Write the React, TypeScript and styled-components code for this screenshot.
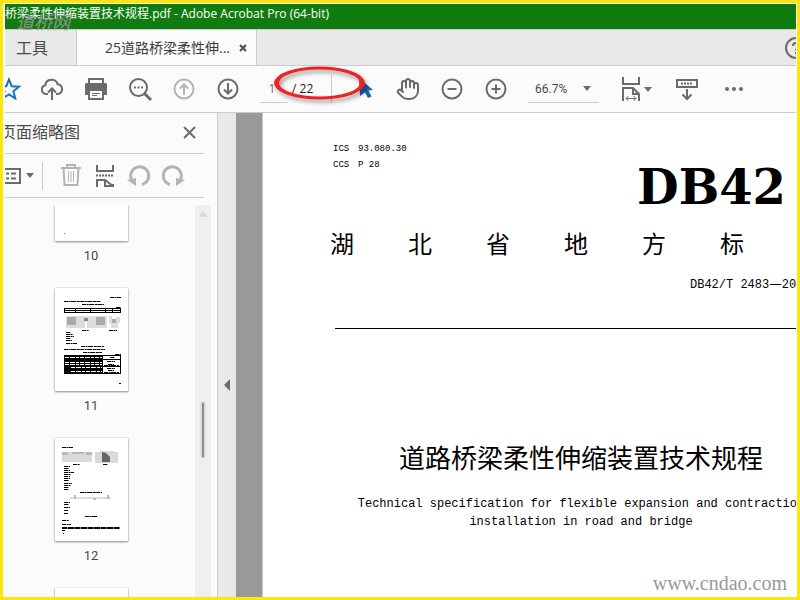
import React, { useState } from "react";
import styled, { createGlobalStyle } from "styled-components";
import { Hand } from "lucide-react";

const UI = `"Open Sans", "Noto Sans CJK SC", sans-serif`;
const NUM = `Roboto, "Noto Sans CJK SC", sans-serif`;
const MONO = `"Liberation Mono", "Noto Sans CJK SC", monospace`;
const INK = "#6b6b6b";
const MUTED = "#b4b4b4";

const GlobalStyle = createGlobalStyle`
  * { box-sizing: border-box; }
  body { margin: 0; font-family: ${UI}; color: #4a4a4a; }
  button, select, input { font: inherit; color: inherit; background: none; border: 0; padding: 0; margin: 0; }
  svg { display: block; flex: none; }
`;

const Frame = styled.div`
  position: relative;
  height: 100vh;
  display: flex;
  flex-direction: column;
  border: 3px solid #fde60a;
  padding: 1px 1px 0 2px;
  background: #fff;
  overflow: hidden;
`;

const TitleBar = styled.header`
  flex: none;
  height: 25px;
  background: #107c10;
  color: #fff;
  font-size: 12px;
  line-height: 20px;
  white-space: nowrap;
  overflow: hidden;
`;

const TitleText = styled.div`
  margin-left: -12px;
`;

const TabBar = styled.div`
  flex: none;
  height: 37px;
  display: flex;
  align-items: stretch;
  background: #e9e9e9;
  border-top: 1px solid #cbcbcb;
  border-bottom: 1px solid #cbcbcb;
  overflow: hidden;
`;

const ToolsTab = styled.button`
  width: 72px;
  padding-right: 17px;
  font-size: 16px;
  line-height: 24px;
  border-right: 1px solid #cbcbcb;
`;

const FileTab = styled.div`
  width: 180px;
  margin-bottom: -1px;
  padding: 0 9px 0 28px;
  display: flex;
  align-items: center;
  justify-content: space-between;
  background: #fbfbfb;
  border-right: 1px solid #cbcbcb;
`;

const FileName = styled.button`
  font-size: 14px;
  line-height: 24px;
  color: #3a3a3a;
  white-space: nowrap;
`;

const Help = styled.button`
  margin-left: auto;
  width: 11px;
  display: flex;
  align-items: center;
  overflow: hidden;
  color: ${INK};
`;

const Toolbar = styled.div`
  flex: none;
  height: 47px;
  display: flex;
  align-items: center;
  background: #fbfbfb;
  border-bottom: 1px solid #cbcbcb;
  overflow: hidden;
`;

const ToolButton = styled.button<{ $w?: number; $muted?: boolean }>`
  flex: none;
  width: ${(p) => p.$w ?? 44}px;
  height: 40px;
  display: flex;
  align-items: center;
  justify-content: center;
  gap: 4px;
  color: ${(p) => (p.$muted ? MUTED : INK)};
`;

const StarButton = styled(ToolButton)`
  justify-content: flex-end;
  padding-right: 9px;
  color: #1473c8;
  overflow: hidden;
`;

const PageField = styled.label`
  flex: none;
  width: 72px;
  height: 28px;
  margin-left: 10px;
  display: flex;
  align-items: stretch;
  gap: 4px;
  font: 12px/28px ${UI};
  color: #222;
  border-right: 1px solid #cbcbcb;
`;

const PageInput = styled.input`
  width: 28px;
  padding-right: 4px;
  text-align: center;
  color: #6a6a6a;
  border-bottom: 1px solid #cbcbcb;
`;

const CursorButton = styled(ToolButton)`
  margin-left: 10px;
  color: #1766ad;
`;

const ZoomBox = styled.div`
  flex: none;
  width: 71px;
  height: 28px;
  margin: 0 16px 0 10px;
  display: flex;
  align-items: center;
  border-bottom: 1px solid #cbcbcb;
  color: ${INK};
`;

const ZoomSelect = styled.select`
  appearance: none;
  width: 55px;
  padding-left: 7px;
  font: 12px/28px ${NUM};
  color: #4a4a4a;
  outline: none;
`;

const Body = styled.div`
  flex: 1;
  min-height: 0;
  display: flex;
`;

const Sidebar = styled.aside`
  flex: none;
  width: 213px;
  display: flex;
  flex-direction: column;
  background: #fbfbfb;
  border-right: 1px solid #cbcbcb;
  overflow: hidden;
`;

const PanelHead = styled.div`
  flex: none;
  height: 41px;
  margin-right: 13px;
  padding: 0 8px 2px 0;
  display: flex;
  align-items: center;
  justify-content: space-between;
  border-bottom: 1px solid #cbcbcb;
`;

const PanelTitle = styled.h2`
  margin: 0 0 0 -5px;
  font-size: 16px;
  line-height: 24px;
  font-weight: 400;
`;

const PanelTools = styled.div`
  flex: none;
  height: 44px;
  margin-right: 13px;
  display: flex;
  align-items: center;
  border-bottom: 1px solid #cbcbcb;
`;

const OptionsButton = styled(ToolButton)`
  justify-content: flex-end;
  gap: 5px;
  padding-right: 8px;
  overflow: hidden;
`;

const Divider = styled.span`
  width: 1px;
  height: 28px;
  margin-right: 11px;
  background: #cbcbcb;
`;

const ThumbArea = styled.div`
  flex: 1;
  min-height: 0;
  margin-top: 7px;
  display: flex;
  justify-content: flex-end;
  overflow: hidden;
`;

const ThumbList = styled.div`
  flex: 1;
  padding-right: 18px;
  display: flex;
  flex-direction: column;
  align-items: center;
`;

const Thumb = styled.button`
  flex: none;
  display: flex;
  flex-direction: column;
  align-items: center;
  font: 13px/30px ${NUM};
  color: #4a4a4a;
`;

const Paper = styled.span<{ $cut?: boolean }>`
  display: flex;
  align-items: flex-end;
  width: 73px;
  height: ${(p) => (p.$cut ? 36 : 103)}px;
  background: #fff;
  box-shadow: 0 1px 2px #8a8a8a, 0 0 1px #aaa;
  overflow: hidden;
`;

const ThumbLabel = styled.span`
  height: 47px;
`;

const ScrollTrack = styled.div`
  width: 16px;
  margin-right: 6px;
  display: flex;
  flex-direction: column;
  align-items: center;
  background: #efefef;
`;

const ScrollThumb = styled.div`
  width: 6px;
  height: 56px;
  margin-top: 184px;
  border: 2px solid #dedede;
  border-width: 0 2px;
  border-radius: 3px;
  background: #8a8a8a;
`;

const Collapse = styled.button`
  flex: none;
  width: 18px;
  display: flex;
  align-items: center;
  justify-content: center;
  padding-top: 60px;
  background: #e9e9e9;
  color: ${INK};
`;

const Canvas = styled.main`
  flex: 1;
  min-width: 0;
  display: flex;
  padding-left: 26px;
  background: #999;
`;

const Sheet = styled.article`
  flex: 1;
  min-width: 0;
  padding: 28px 0 0 67px;
  background: #fff;
  border-left: 1px solid #cbcbcb;
  color: #000;
  overflow: hidden;
`;

const SheetColumn = styled.div`
  width: 502px;
  display: flex;
  flex-direction: column;
`;

const Codes = styled.dl`
  margin: 0 0 0 3px;
  display: grid;
  grid-template-columns: 25px auto;
  font: 9px/16px ${MONO};
  dd { margin: 0; }
`;

const Emblem = styled.div`
  align-self: flex-end;
  margin-right: 46px;
  font: 700 48px/28px "DejaVu Serif", serif;
`;

const Region = styled.div`
  display: flex;
  gap: 54px;
  margin-top: 26px;
  font: 24px/32px "Noto Sans CJK SC", sans-serif;
`;

const StandardNo = styled.div`
  height: 20px;
  margin: 16px 0 0 360px;
  font: 12px/20px ${MONO};
  white-space: pre;
`;

const Dash = styled.span`
  font-family: "Noto Sans CJK SC", sans-serif;
  font-size: 14px;
  line-height: 1;
`;

const Rule = styled.hr`
  width: 100%;
  height: 1px;
  margin: 33px 0 0 5px;
  border: 0;
  background: #000;
`;

const DocTitle = styled.h1`
  margin: 110px 0 0;
  text-align: center;
  font: 400 26px/36px "Noto Sans CJK SC", sans-serif;
`;

const Subtitle = styled.p`
  margin: 20px 0 0;
  text-align: center;
  font: 12px/18px ${MONO};
`;

const SiteMark = styled.div`
  position: absolute;
  right: 10px;
  bottom: 2px;
  font: 20px/24px "Liberation Serif", serif;
  color: #999;
`;

const BrandMark = styled.div`
  position: absolute;
  left: 13px;
  top: 6px;
  font: italic 18px/24px "Noto Sans CJK SC", sans-serif;
  color: rgba(165, 155, 165, 0.85);
`;

const RingMark = styled.svg`
  position: absolute;
  left: 266px;
  top: 60px;
  pointer-events: none;
`;

type IconProps = { w?: number; h?: number; sw?: number; children: React.ReactNode };
const Icon = ({ w = 24, h = 24, sw = 2, children }: IconProps) => (
  <svg width={w} height={h} viewBox={`0 0 ${w} ${h}`} fill="none" stroke="currentColor" strokeWidth={sw} aria-hidden="true">
    {children}
  </svg>
);

const Caret = () => (
  <Icon w={8} h={5}>
    <path d="M0 0h8L4 5z" fill="currentColor" stroke="none" />
  </Icon>
);

const Cross = ({ size, sw }: { size: number; sw: number }) => (
  <Icon w={size} h={size} sw={sw}>
    <path d={`M1 1L${size - 1} ${size - 1}M${size - 1} 1L1 ${size - 1}`} />
  </Icon>
);

const dash = "4 .6 2 .5 5 .7 3 .4";

const PageTenArt = () => (
  <svg width="73" height="36">
    <rect x="9" y="28" width="1" height="1" fill="#777" />
  </svg>
);

const PageElevenArt = () => (
  <svg width="73" height="103" viewBox="0 0 73 103" stroke="#000" fill="none">
    <g strokeDasharray={dash}>
      <path d="M55 9.5H66M9 13.5H46M27 16.5H49M61 19.500H66M27 42.500H34M54 42.500H62" />
      <path d="M11 44.500h5M11 46.500h7M11 48.500h8M11 50.500h5M11 52.500h6M11 55.500h11" />
      <path d="M26 58.500H49M9 61.500H50M28 64.500H47M60 66.500H66" />
    </g>
    <path d="M9 20.500H66M9 22.500H66M9 24.500H66" />
    <path d="M9.500 20v5M20.500 20v5M35.500 20v5M50.500 20v5M57.500 20v5M65.500 20v5" />
    <g stroke="none">
      <path fill="#ddd" d="M11 28h41v12H11zM54 28h3v8h-3zM61 29h4v6h-4zM56 35h7v5h-7z" />
      <path fill="#aaa" d="M12 29h9v8h-9zM41 29h9v8h-9zM57 31h4v4h-4z" />
      <path fill="#888" d="M29 30h4v3h-4z" />
      <path fill="#fff" d="M30 34h2v6h-2z" />
    </g>
    <path fill="#000" stroke="none" d="M9 67h39v19H9z" />
    <path d="M9 67.500H66M9 71.500H66M48 78.500H66M9 85.500H66M65.500 67v19" />
    <g stroke="#fff" strokeDasharray="4 1 5 1 3 1">
      <path d="M10 69.500H47M10 74.500H47M10 76.500H47M16 79.500H47M16 83.500H47" />
    </g>
    <path strokeDasharray={dash} d="M55 69.500h5M52 73.500h8M53 76.500h6M49 77.500h15M52 80.500h8M53 82.500h6M49 84.500h15M64 95.500h2" />
  </svg>
);

const PageTwelveArt = () => (
  <svg width="73" height="103" viewBox="0 0 73 103" stroke="#000" fill="none">
    <g stroke="none">
      <path fill="#d9d9d9" d="M7 14h30v10H7zM40 14h5v11h-5zM45 13h14v12H45zM59 14h4v11h-4z" />
      <path fill="#b8b8b8" d="M7 14h6v3H7zM17 14h12v2H17zM31 14h6v3h-6z" />
      <path fill="#666" d="M47 14l4 1 4 4v5h-8z" />
      <path fill="#ddd" d="M15 59h41v2H15z" />
      <path fill="#bbb" d="M19 57h2v4h-2zM52 57h2v4h-2zM38 60h3v2h-3z" />
    </g>
    <g strokeDasharray={dash}>
      <path d="M7 9.500h11M18 26.500h7M48 26.500h5" />
      <path d="M9 28.500h6M9 30.500h5M9 32.500h6M9 34.500h10M9 36.500h7M9 38.500h6M9 40.500h6M9 42.500h5M9 45.500h8M9 47.500h7M9 49.500h5M9 51.500h5" />
      <path d="M25 54.500H47M9 64.500h6M9 66.500h5M9 69.500h6M9 72.500h4M9 75.500h4" />
      <path d="M30 78.500H42M7 82.500h7M7 86.500h9M7 92.500h3M8 95.500h1" />
    </g>
    <path strokeWidth="2" strokeDasharray="5 .5 7 .5" d="M7 90H65" />
  </svg>
);

export default function App() {
  const [page, setPage] = useState("1");
  return (
    <>
      <GlobalStyle />
      <Frame>
        <TitleBar>
          <TitleText>路桥梁柔性伸缩装置技术规程.pdf - Adobe Acrobat Pro (64-bit)</TitleText>
        </TitleBar>

        <TabBar>
          <ToolsTab>工具</ToolsTab>
          <FileTab>
            <FileName>25道路桥梁柔性伸...</FileName>
            <button aria-label="Close tab"><Cross size={8} sw={2} /></button>
          </FileTab>
          <Help aria-label="Help">
            <Icon w={22} h={22}>
              <circle cx="11" cy="11" r="10" />
              <path d="M8 9c0-4 6-4 6-.500 0 2.500-3 2.500-3 5M11 15v2" />
            </Icon>
          </Help>
        </TabBar>

        <Toolbar>
          <StarButton $w={25} aria-label="Favourite">
            <Icon>
              <path d="M12 2.500l2.700 6.700 7.300.500-5.600 4.600 1.800 7L12 17.400l-6.200 3.900 1.800-7L2 9.700l7.300-.500z" />
            </Icon>
          </StarButton>
          <ToolButton aria-label="Upload">
            <Icon>
              <path d="M8 17H6a4.400 4.400 0 0 1-.600-8.700C5.800 1.200 16.500.800 17.600 7.300A4.900 4.900 0 0 1 18 17h-2M12 23V12M8 15.500l4-4 4 4" />
            </Icon>
          </ToolButton>
          <ToolButton aria-label="Print">
            <Icon>
              <path d="M5 7V2h14v5" />
              <path fill="currentColor" stroke="none" d="M2 6h20l1 1v11h-4v-6H5v6H1V7z" />
              <path d="M5 13h14v9H5z" />
              <path strokeWidth="1" d="M8 16.500h8M8 18.500h5" />
            </Icon>
          </ToolButton>
          <ToolButton aria-label="Search">
            <Icon>
              <circle cx="10.500" cy="10.500" r="8.500" />
              <path strokeWidth="3" d="M16.500 16.500L23 23" />
              <path d="M6 10.500h2M9.500 10.500h2M13 10.500h2" />
            </Icon>
          </ToolButton>
          <ToolButton $muted aria-label="Previous page">
            <Icon><circle cx="12" cy="12" r="9.500" /><path d="M12 18V8M8 11.500l4-4 4 4" /></Icon>
          </ToolButton>
          <ToolButton aria-label="Next page">
            <Icon><circle cx="12" cy="12" r="9.500" /><path d="M12 6v10M8 12.500l4 4 4-4" /></Icon>
          </ToolButton>
          <PageField>
            <PageInput aria-label="Page number" value={page} onChange={(e) => setPage(e.target.value)} />
            <span>/ 22</span>
          </PageField>
          <CursorButton aria-label="Select">
            <Icon>
              <path fill="currentColor" stroke="none" d="M7 1l14 12-4.500.500 3 6-3.500 1.500-3-5.500L8 19z" />
            </Icon>
          </CursorButton>
          <ToolButton aria-label="Pan">
            <Hand size={24} strokeWidth={2} />
          </ToolButton>
          <ToolButton aria-label="Zoom out">
            <Icon><circle cx="12" cy="12" r="9.500" /><path d="M7.500 12h9" /></Icon>
          </ToolButton>
          <ToolButton aria-label="Zoom in">
            <Icon><circle cx="12" cy="12" r="9.500" /><path d="M7.500 12h9M12 7.500v9" /></Icon>
          </ToolButton>
          <ZoomBox>
            <ZoomSelect aria-label="Zoom level" defaultValue="66.7%">
              <option>66.7%</option>
              <option>100%</option>
            </ZoomSelect>
            <Caret />
          </ZoomBox>
          <ToolButton aria-label="Fit width">
            <Icon w={18} h={24}>
              <path d="M1 0v7h16V0M1 24V11h10l6 6v7M11 11v6h6" />
              <path strokeWidth="1" d="M4 21.500h10M6.500 19L4 21.500 6.500 24M11.500 19l2.500 2.500-2.500 2.500" />
            </Icon>
            <Caret />
          </ToolButton>
          <ToolButton $w={56} aria-label="Scrolling">
            <Icon>
              <rect x="2" y="3" width="20" height="7" />
              <path strokeDasharray="2 1" d="M6 6.500h12" />
              <path d="M12 12v9M7.500 17.500l4.500 4.500 4.500-4.500" />
            </Icon>
          </ToolButton>
          <ToolButton $w={38} aria-label="More">
            <Icon>
              <g fill="currentColor" stroke="none">
                <circle cx="5" cy="12" r="2" /><circle cx="12" cy="12" r="2" /><circle cx="19" cy="12" r="2" />
              </g>
            </Icon>
          </ToolButton>
        </Toolbar>

        <Body>
          <Sidebar>
            <PanelHead>
              <PanelTitle>页面缩略图</PanelTitle>
              <ToolButton $w={14} aria-label="Close panel"><Cross size={13} sw={2} /></ToolButton>
            </PanelHead>
            <PanelTools>
              <OptionsButton $w={37} aria-label="Options">
                <Icon w={20} h={18}>
                  <path d="M1 2h18v14H1z" />
                  <path d="M5 6.500h3M10 6.500h5M5 11.500h3M10 11.500h5" />
                </Icon>
                <Caret />
              </OptionsButton>
              <Divider />
              <ToolButton $w={34} $muted aria-label="Delete page">
                <Icon>
                  <path d="M2 4h20M8 4V1h8v3M4.500 4l1 17h13l1-17" />
                  <path strokeWidth="1" d="M9.500 7v11M12 7v11M14.500 7v11" />
                </Icon>
              </ToolButton>
              <ToolButton $w={33} aria-label="Split pages">
                <Icon w={18} h={22}>
                  <path d="M1 0v6h16V0M1 22v-7h8l8 6M9 15v6h8v-2" />
                  <path strokeDasharray="2 1" d="M0 10.500h18" />
                </Icon>
              </ToolButton>
              <ToolButton $w={36} $muted aria-label="Rotate left">
                <Icon>
                  <path strokeWidth="3" d="M15 20.500a9 9 0 1 0-10.500-5" />
                  <path fill="currentColor" stroke="none" d="M0 16l9-2 0 8z" />
                </Icon>
              </ToolButton>
              <ToolButton $w={32} $muted aria-label="Rotate right">
                <Icon>
                  <path strokeWidth="3" d="M9 20.500a9 9 0 1 1 10.500-5" />
                  <path fill="currentColor" stroke="none" d="M24 16l-9-2 0 8z" />
                </Icon>
              </ToolButton>
            </PanelTools>
            <ThumbArea>
              <ThumbList>
                <Thumb><Paper $cut><PageTenArt /></Paper><ThumbLabel>10</ThumbLabel></Thumb>
                <Thumb><Paper><PageElevenArt /></Paper><ThumbLabel>11</ThumbLabel></Thumb>
                <Thumb><Paper><PageTwelveArt /></Paper><ThumbLabel>12</ThumbLabel></Thumb>
                <Thumb aria-label="Page 13"><Paper /></Thumb>
              </ThumbList>
              <ScrollTrack>
                <svg width="8" height="13"><path d="M0 12l1-3 3-3 3 3 1 3z" fill="#dadada" /></svg>
                <ScrollThumb />
              </ScrollTrack>
            </ThumbArea>
          </Sidebar>

          <Collapse aria-label="Collapse panel">
            <Icon w={6} h={12}><path d="M6 0v12L0 6z" fill="currentColor" stroke="none" /></Icon>
          </Collapse>

          <Canvas>
            <Sheet>
              <SheetColumn>
                <Codes>
                  <dt>ICS</dt><dd>93.080.30</dd>
                  <dt>CCS</dt><dd>P 28</dd>
                </Codes>
                <Emblem>DB42</Emblem>
                <Region>
                  {["湖", "北", "省", "地", "方", "标"].map((c) => <span key={c}>{c}</span>)}
                </Region>
                <StandardNo>DB42/T 2483<Dash>—</Dash>20</StandardNo>
                <Rule />
                <DocTitle>道路桥梁柔性伸缩装置技术规程</DocTitle>
                <Subtitle>
                  Technical specification for flexible expansion and contraction
                  <br />
                  installation in road and bridge
                </Subtitle>
              </SheetColumn>
            </Sheet>
          </Canvas>
        </Body>

        <BrandMark>道桥网</BrandMark>
        <SiteMark>www.cndao.com</SiteMark>
        <RingMark width="106" height="46" viewBox="0 0 106 46" aria-hidden="true">
          <defs>
            <filter id="ring-shadow" x="-10%" y="-20%" width="125%" height="150%">
              <feDropShadow dx="2" dy="3" stdDeviation="2" floodColor="#000" floodOpacity="0.4" />
            </filter>
          </defs>
          <path
            fill="#ee2024"
            fillRule="evenodd"
            filter="url(#ring-shadow)"
            d="M5 20a45.500 16.500 0 1 0 91 0a45.500 16.500 0 1 0-91 0zM10 20a40.500 13.500 0 1 0 81 0a40.500 13.500 0 1 0-81 0z"
          />
        </RingMark>
      </Frame>
    </>
  );
}
